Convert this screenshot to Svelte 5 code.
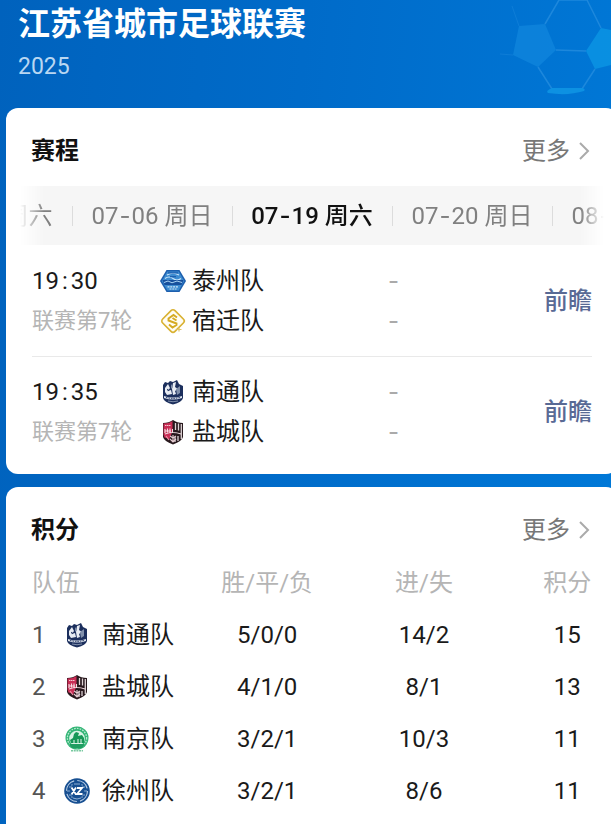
<script>
  const tabs = [
    ['07', '05', '周六'],
    ['07', '06', '周日'],
    ['07', '19', '周六'],
    ['07', '20', '周日'],
    ['08', '02', '周六']
  ];
  let current = $state(2);

  const matches = [
    { h: '19', m: '30', round: '联赛第7轮', teams: ['泰州', '宿迁'] },
    { h: '19', m: '35', round: '联赛第7轮', teams: ['南通', '盐城'] }
  ];

  const standings = [
    { team: '南通', record: '5/0/0', goals: '14/2', points: 15 },
    { team: '盐城', record: '4/1/0', goals: '8/1', points: 13 },
    { team: '南京', record: '3/2/1', goals: '10/3', points: 11 },
    { team: '徐州', record: '3/2/1', goals: '8/6', points: 11 }
  ];
</script>

{#snippet badge(team)}
  <svg class="badge" viewBox="0 0 26 26" aria-hidden="true">
    {#if team === '泰州'}
      <path d="M6.500 2h13L26 13l-6.500 11h-13L0 13z" fill="#1d5fae" />
      <path d="M7.300 3.500h11.400L24.200 13l-5.500 9.500H7.300L1.800 13z" fill="#3d8bd0" />
      <path d="M7 7q6-3.500 12 0M5 10.500q4-3 8 0t8 0" fill="none" stroke="#c9e5fa" stroke-width="1.200" />
      <path d="M8 4.800h10M10 8.700h6" stroke="#1d5fae" stroke-width="1.200" />
      <path d="M2.500 12h21l-2 5H4.500z" fill="#174f9c" />
      <path d="M4 14.500l4-1.500 4 1.800 5-1.800 5 1.500" fill="none" stroke="#a8d3f4" />
      <path d="M7.500 18.800h11M9.500 21h7" stroke="#d3e9fa" stroke-width="1.200" stroke-dasharray="2 .8" />
    {:else if team === '宿迁'}
      <rect x="4.300" y="4.300" width="17.400" height="17.400" rx="2.800" transform="rotate(45 13 13)" fill="#fffdf5" stroke="#d9b233" stroke-width="1.700" />
      <path d="M17 9.500l-3.500-2.500-5 3.500v2l8 3v1.500L12.500 19.500 9 16.500M12.500 10l4 2.500" fill="none" stroke="#d5aa22" stroke-width="1.900" />
      <path d="M16.500 21.500h5M19 19.500v4" stroke="#dfc36b" stroke-width="1.200" />
    {:else if team === '南通'}
      <path d="M3 6l2-3 3 1 2-2 3 1 4-2 2 4 4 2v12q-1 4-10 6.500-9-2.500-10-6.500z" fill="#1c2f5d" />
      <path d="M8 5l2 4-2 3 3-1 1 4-5 1-2-3V9zM13 4l3-1-1 5 3 2-3 2 1 3-3 1-1-6z" fill="#e8ecf3" />
      <path d="M16 10l4-3v7l-3 2zM11 5l2 3-2 2" fill="#8190ab" />
      <path d="M4 17q9 3 18 0v2q-9 3-18 0z" fill="#dce2ec" />
      <path d="M6 18.400q7 2 14 0" fill="none" stroke="#1c2f5d" stroke-dasharray="1.500 1" />
      <path d="M8 22q5 1.500 10 0" fill="none" stroke="#8190ab" />
      <path d="M7.500 10l1 2M17 5v3" stroke="#1c2f5d" stroke-width="1.200" />
    {:else if team === '盐城'}
      <path d="M3 4q6 0 10-3 4 3 10 3v14q-1 4-10 7.500-9-3.500-10-7.500z" fill="#28181d" />
      <path d="M3.500 4.500q5.500 0 9-2.500v10l-3 8-5-1.500-1-3z" fill="#c82d55" />
      <path d="M15.500 4v7M18.500 4.500v7M21.300 5v15M18 17v5M15 18v5" stroke="#ded3d6" stroke-width="1.300" />
      <path d="M5 6.500h6" stroke="#f7c3ce" stroke-width="1.200" stroke-dasharray="1.500 .5" />
      <path d="M5 10v4M7.500 9.500v4M10 9.500v4M5 12h6M12.500 10v4M5 15q8-3 16 0" fill="none" stroke="#f4dfe3" stroke-width="1.100" />
      <path d="M10 17l3 2 3-2M10 20l3 3 3-3M13 16v6" fill="none" stroke="#e5cbd1" stroke-width="1.100" />
      <path d="M6 17l3 4" stroke="#ef91a7" stroke-width="1.200" />
    {:else if team === '南京'}
      <circle cx="13" cy="12" r="11.500" fill="#32b475" />
      <circle cx="13" cy="12" r="9.600" fill="none" stroke="#b7ead0" stroke-width="1.300" stroke-dasharray="1.700 1.100" />
      <circle cx="13" cy="12.500" r="7.800" fill="#d9f3e5" />
      <path d="M6 14l3-2 1-4 2-2 3 1-1 3 4-1 2 3v5H7z" fill="#169757" />
      <path d="M10 14v3M14 13v4M17 13v4" stroke="#e7f7ee" />
      <path d="M5 18h16l-3 4H8z" fill="#209d61" />
      <path d="M7 24.800h12" stroke="#78c9a0" stroke-width="1.500" stroke-dasharray="2 .7" />
    {:else}
      <circle cx="13" cy="13" r="12.800" fill="#174f91" />
      <circle cx="13" cy="13" r="10.500" fill="none" stroke="#b7cce4" stroke-width="1.200" stroke-dasharray="13.300 3.190" />
      <path d="M5 9h3V6M21 9h-3V6M3 13h3M20 13h3M5 17h3v3M21 17h-3v3" fill="none" stroke="#8eafd3" />
      <circle cx="13" cy="13" r="7.200" fill="#174f91" />
      <path d="M7.500 9.500l4.500 7M12 9.500l-4.500 7M13 10h5l-5 6h5.500" fill="none" stroke="#fff" stroke-width="1.800" />
      <path d="M9 20q4 2 8 0M10 6h6" fill="none" stroke="#8eafd3" />
    {/if}
  </svg>
{/snippet}

{#snippet sectionHead(title)}
  <header class="section-head">
    <h2>{title}</h2>
    <a class="more" href="#more">更多
      <svg viewBox="0 0 12 20" aria-hidden="true"><path d="M2 2l8 8-8 8" /></svg>
    </a>
  </header>
{/snippet}

<main class="page">
  <svg class="football" viewBox="0 0 111 108" aria-hidden="true">
    <path d="M19 26l26-2 11 26-18 17-25-12z" fill="#1289df" opacity=".65" />
    <path d="M101 28l10 2v35l-16 4-9-18z" fill="#0b94e3" opacity=".85" />
    <path d="M45 24L59 0h28l14 28M56 50l30 1M38 67l14 22h30l13-20" fill="none" stroke="#2990df" stroke-width="1.500" opacity=".7" />
    <path d="M0 54l13 1M19 26L12 6" fill="none" stroke="#2990df" opacity=".35" />
    <path d="M52 88h30q4 1 2 3-16 5-36 2-3-2 4-5" fill="#0d91e2" />
  </svg>

  <header class="banner">
    <h1>江苏省城市足球联赛</h1>
    <p>2025</p>
  </header>

  <section class="card">
    {@render sectionHead('赛程')}
    <nav class="tabs" aria-label="比赛日期">
      {#each tabs as [month, day, week], i}
        <button class:active={i === current} onclick={() => (current = i)}>{month}<span class="dash">-</span>{day} {week}</button>
      {/each}
    </nav>
    <ul class="matches">
      {#each matches as match}
        <li>
          <div class="when">
            <time>{match.h}<span class="colon">:</span>{match.m}</time>
            <span class="round">{match.round}</span>
          </div>
          <div>
            {#each match.teams as team}
              <div class="team">{@render badge(team)}{team}队</div>
            {/each}
          </div>
          <div class="scores">
            <span>-</span>
            <span>-</span>
          </div>
          <a class="preview" href="#preview">前瞻</a>
        </li>
      {/each}
    </ul>
  </section>

  <section class="card last">
    {@render sectionHead('积分')}
    <table>
      <thead>
        <tr><th>队伍</th><th>胜/平/负</th><th>进/失</th><th>积分</th></tr>
      </thead>
      <tbody>
        {#each standings as row, i}
          <tr>
            <td>
              <div class="entry"><span class="rank">{i + 1}</span>{@render badge(row.team)}<span>{row.team}队</span></div>
            </td>
            <td>{row.record}</td>
            <td>{row.goals}</td>
            <td>{row.points}</td>
          </tr>
        {/each}
      </tbody>
    </table>
  </section>
</main>

<style>
  .page {
    position: relative;
    box-sizing: border-box;
    display: flex;
    flex-direction: column;
    min-height: 100vh;
    padding-left: 6px;
    overflow: hidden;
    background: linear-gradient(95deg, #0062bd, #006bc9 45%, #0079d8);
    color: #1a1a1a;
    font-family: Roboto, "Noto Sans CJK SC", sans-serif;
    font-size: 24px;
    line-height: 40px;
  }
  .football {
    position: absolute;
    top: 0;
    right: 0;
    width: 111px;
    height: 108px;
  }
  h1, h2, p, ul { margin: 0; padding: 0; }
  a { color: inherit; text-decoration: none; }

  .banner {
    height: 108px;
    padding-left: 12px;
    box-sizing: border-box;
    color: #fff;
  }
  h1 {
    font-size: 32px;
    font-weight: 700;
    line-height: 48px;
  }
  .banner p {
    font-size: 23px;
    line-height: 38px;
    color: #b9d7f2;
  }

  .card {
    position: relative;
    margin: 0 -7px 13px 0;
    border-radius: 12px;
    background: #fff;
  }
  .last {
    flex: 1;
    margin-bottom: 0;
    border-radius: 12px 12px 0 0;
  }
  .section-head {
    display: flex;
    align-items: center;
    justify-content: space-between;
    height: 70px;
    padding: 8px 26px 0 25px;
  }
  h2 {
    font-size: 24px;
    font-weight: 700;
    color: #111;
  }
  .more {
    display: flex;
    align-items: center;
    gap: 8px;
    color: #777;
  }
  .more svg {
    width: 12px;
    height: 20px;
    margin-right: 2px;
    fill: none;
    stroke: #aaa;
    stroke-width: 2;
  }

  .tabs {
    display: flex;
    justify-content: center;
    height: 59px;
    margin: 0 14px;
    overflow: hidden;
    background: #f6f6f6;
    mask-image: linear-gradient(90deg, transparent, #000 24px, #000 calc(100% - 24px), transparent);
  }
  .tabs button {
    position: relative;
    flex: none;
    width: 160px;
    padding: 0;
    border: 0;
    background: none;
    color: #808080;
    font: inherit;
    white-space: nowrap;
    cursor: pointer;
  }
  .tabs button + button::before {
    content: "";
    position: absolute;
    left: 0;
    top: 20px;
    width: 1px;
    height: 20px;
    background: #dcdcdc;
  }
  .tabs .active {
    color: #111;
    font-weight: 500;
  }
  .dash {
    margin: 0 1px;
    font-family: Inter, sans-serif;
  }

  .matches { list-style: none; }
  li {
    display: grid;
    grid-template-columns: 128px 1fr 156px 48px;
    align-items: center;
    margin: 0 26px;
    padding: 16px 0 15px;
  }
  li + li {
    padding: 15px 0 22px;
    border-top: 1px solid #e9e9e9;
  }
  .when, .scores {
    display: flex;
    flex-direction: column;
  }
  .colon { margin: 0 3px; }
  .round {
    font-size: 22px;
    color: #b5b5b5;
  }
  .team {
    display: flex;
    align-items: center;
    gap: 6px;
  }
  .badge {
    flex: none;
    width: 26px;
    height: 26px;
  }
  .scores {
    color: #aaa;
    font-family: Inter, sans-serif;
  }
  .preview {
    color: #596a95;
    font-weight: 500;
  }

  table {
    width: 100%;
    padding: 0 26px;
    border-spacing: 0;
    table-layout: fixed;
  }
  th, td {
    width: 28%;
    padding: 0;
    text-align: center;
    white-space: nowrap;
  }
  th {
    height: 44px;
    color: #b5b5b5;
    font-weight: 400;
    line-height: 36px;
    vertical-align: top;
  }
  td { height: 52px; }
  th:first-child { text-align: left; }
  th:last-child, td:last-child {
    width: 16%;
    padding-left: 40px;
    box-sizing: border-box;
  }
  .entry {
    display: flex;
    align-items: center;
    text-align: left;
  }
  .rank {
    width: 32px;
    color: #555;
  }
  .entry .badge { margin-right: 12px; }
</style>
